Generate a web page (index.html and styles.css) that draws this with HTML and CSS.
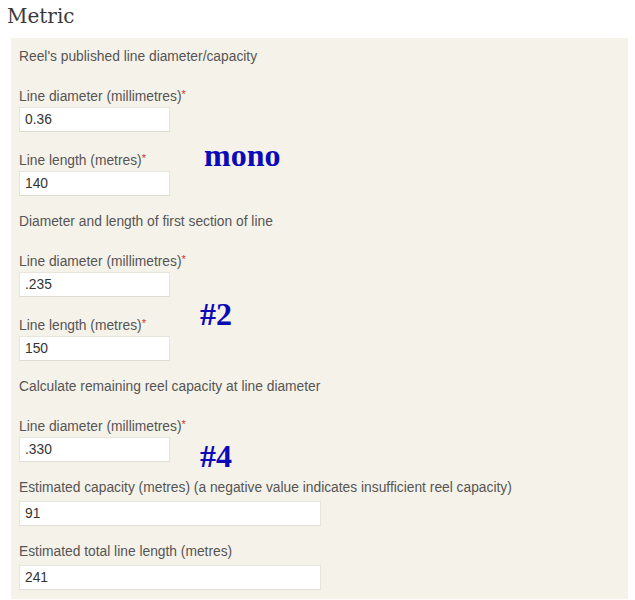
FILE: index.html
```html
<!DOCTYPE html>
<html>
<head>
<meta charset="utf-8">
<link rel="stylesheet" href="styles.css">
</head>
<body>
<h2 class="title">Metric</h2>
<div class="panel">
  <p class="section">Reel's published line diameter/capacity</p>
  <div class="field">
    <label class="label">Line diameter (millimetres)<span class="req">*</span></label>
    <div class="input short">0.36</div>
  </div>
  <div class="field">
    <label class="label">Line length (metres)<span class="req">*</span></label>
    <div class="input short">140</div>
  </div>
  <p class="section">Diameter and length of first section of line</p>
  <div class="field">
    <label class="label">Line diameter (millimetres)<span class="req">*</span></label>
    <div class="input short">.235</div>
  </div>
  <div class="field">
    <label class="label">Line length (metres)<span class="req">*</span></label>
    <div class="input short">150</div>
  </div>
  <p class="section">Calculate remaining reel capacity at line diameter</p>
  <div class="field">
    <label class="label">Line diameter (millimetres)<span class="req">*</span></label>
    <div class="input short">.330</div>
  </div>
  <div class="field">
    <label class="label">Estimated capacity (metres) (a negative value indicates insufficient reel capacity)</label>
    <div class="input long">91</div>
  </div>
  <div class="field last">
    <label class="label">Estimated total line length (metres)</label>
    <div class="input long">241</div>
  </div>
  <span class="note note-mono">mono</span>
  <span class="note note-2">#2</span>
  <span class="note note-4">#4</span>
</div>
</body>
</html>
```
FILE: styles.css
```css
html, body {
  margin: 0;
  padding: 0;
  background: #ffffff;
}
body {
  font-family: "Liberation Sans", Arial, sans-serif;
  font-size: 13.8px;
  color: #555555;
}
.title {
  margin: 0;
  padding: 3px 0 0 7px;
  height: 35px;
  font-family: "DejaVu Serif", Georgia, serif;
  font-weight: normal;
  font-size: 20px;
  line-height: 26px;
  color: #3a3a3a;
}
.panel {
  position: relative;
  margin-left: 11px;
  width: 617px;
  box-sizing: border-box;
  padding: 10px 0 9px 8px;
  background: #f5f2e9;
}
.section {
  margin: 0 0 19px 0;
  line-height: 18px;
  height: 18px;
}
.field {
  margin-bottom: 17px;
}
.field.last {
  margin-bottom: 0;
}
.label {
  display: block;
  line-height: 18px;
  height: 18px;
  margin-bottom: 4px;
}
.req {
  color: #d0312d;
  font-size: 11px;
  vertical-align: 3px;
}
.input {
  box-sizing: border-box;
  height: 25px;
  line-height: 23px;
  padding-left: 5px;
  background: #ffffff;
  border: 1px solid #e8e5dc;
  border-bottom-color: #dedbd1;
  color: #333333;
  font-size: 13.8px;
}
.input.short {
  width: 151px;
}
.input.long {
  width: 302px;
}
.note {
  position: absolute;
  font-family: "Liberation Serif", "Times New Roman", serif;
  font-weight: bold;
  color: #0a0ab8;
  line-height: 1;
}
.note-mono {
  left: 193px;
  top: 101px;
  font-size: 32px;
}
.note-2 {
  left: 189px;
  top: 260px;
  font-size: 32px;
}
.note-4 {
  left: 189px;
  top: 402px;
  font-size: 32px;
}
```
